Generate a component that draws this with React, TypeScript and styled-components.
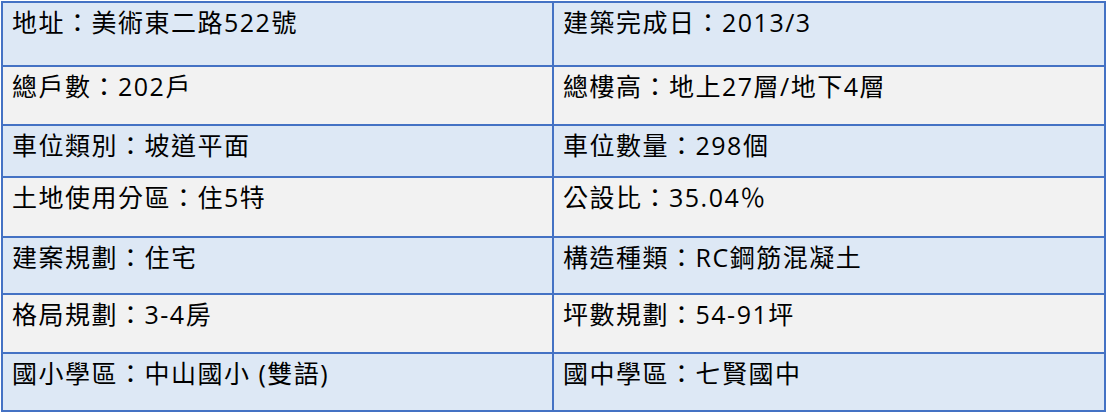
import React from "react";
import styled, { createGlobalStyle } from "styled-components";

const GlobalStyle = createGlobalStyle`
  html, body {
    margin: 0;
    padding: 0;
    background: #ffffff;
  }
  body {
    font-family: "Open Sans", "Noto Sans CJK TC", sans-serif;
  }
`;

const Page = styled.div`
  padding: 1px 0 0 1px;
  width: 1106px;
  height: 412px;
  box-sizing: border-box;
  overflow: hidden;
`;

const Table = styled.div`
  display: flex;
  flex-direction: column;
  gap: 2px;
  padding: 2px;
  width: 1105px;
  box-sizing: border-box;
  background: #4472c4;
`;

const Row = styled.div<{ $h: number }>`
  display: grid;
  grid-template-columns: 549px 550px;
  column-gap: 2px;
  height: ${(p) => p.$h}px;
`;

const Cell = styled.div<{ $tone: "blue" | "gray" }>`
  background: ${(p) => (p.$tone === "blue" ? "#dde8f5" : "#f2f2f2")};
  padding: 4px 0 0 9px;
  font-family: "Open Sans", "Noto Sans CJK TC", sans-serif;
  font-size: 25px;
  line-height: 30px;
  letter-spacing: 1.5px;
  color: #000000;
  white-space: nowrap;
  overflow: hidden;
`;

const rows: { h: number; left: string; right: string }[] = [
  { h: 62, left: "地址：美術東二路522號", right: "建築完成日：2013/3" },
  { h: 57, left: "總戶數：202戶", right: "總樓高：地上27層/地下4層" },
  { h: 50, left: "車位類別：坡道平面", right: "車位數量：298個" },
  { h: 58, left: "土地使用分區：住5特", right: "公設比：35.04％" },
  { h: 55, left: "建案規劃：住宅", right: "構造種類：RC鋼筋混凝土" },
  { h: 57, left: "格局規劃：3-4房", right: "坪數規劃：54-91坪" },
  { h: 56, left: "國小學區：中山國小 (雙語)", right: "國中學區：七賢國中" },
];

export default function App() {
  return (
    <>
      <GlobalStyle />
      <Page>
        <Table>
          {rows.map((r, i) => {
            const tone = i % 2 === 0 ? "blue" : "gray";
            return (
              <Row key={i} $h={r.h}>
                <Cell $tone={tone}>{r.left}</Cell>
                <Cell $tone={tone}>{r.right}</Cell>
              </Row>
            );
          })}
        </Table>
      </Page>
    </>
  );
}
